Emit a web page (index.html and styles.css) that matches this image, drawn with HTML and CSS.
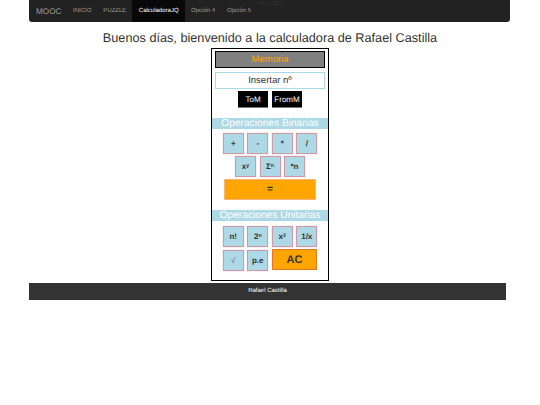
FILE: index.html
```html
<!DOCTYPE html>
<html lang="es">
<head>
<meta charset="utf-8">
<title>Calculadora</title>
<link rel="stylesheet" href="styles.css">
</head>
<body>
<nav class="navbar">
  <a class="brand">MOOC</a>
  <a class="link">INICIO</a>
  <a class="link">PUZZLE</a>
  <a class="link active">CalculadoraJQ</a>
  <a class="link">Opción 4</a>
  <a class="link">Opción 5</a>
  <span class="ghost">=PUZZLE</span>
</nav>
<h1 class="title">Buenos días, bienvenido a la calculadora de Rafael Castilla</h1>
<main class="calc">
  <div class="memory">Memoria</div>
  <input class="entry" type="text" placeholder="Insertar nº">
  <div class="mem-row">
    <button class="mem-btn">ToM</button>
    <button class="mem-btn">FromM</button>
  </div>
  <div class="section">Operaciones Binarias</div>
  <div class="row row-first">
    <button class="key">+</button>
    <button class="key">-</button>
    <button class="key">*</button>
    <button class="key">/</button>
  </div>
  <div class="row">
    <button class="key">x<sup>y</sup></button>
    <button class="key">Σ<sup>n</sup></button>
    <button class="key">*n</button>
  </div>
  <div class="row">
    <button class="equals">=</button>
  </div>
  <div class="section">Operaciones Unitarias</div>
  <div class="row row-first-u">
    <button class="key">n!</button>
    <button class="key">2<sup>n</sup></button>
    <button class="key">x<sup>2</sup></button>
    <button class="key">1/x</button>
  </div>
  <div class="row row-last">
    <button class="key key-root">√</button>
    <button class="key">p.e</button>
    <button class="clear">AC</button>
  </div>
</main>
<footer class="footer">Rafael Castilla</footer>
</body>
</html>
```

FILE: styles.css
```css
* { box-sizing: border-box; }
html, body { margin: 0; padding: 0; background: #fff; }
body {
  font-family: "Liberation Sans", Arial, sans-serif;
  color: #333;
  text-rendering: geometricPrecision;
}
button, input { text-rendering: geometricPrecision; }

.navbar {
  display: flex;
  align-items: stretch;
  width: 481px;
  height: 22px;
  margin-left: 29px;
  padding-left: 7px;
  background: #222;
  border-radius: 0 0 3px 3px;
}
.brand {
  display: flex;
  align-items: center;
  width: 31px;
  font-size: 8.2px;
  color: #9d9d9d;
}
.link {
  display: flex;
  align-items: center;
  padding: 0 6px;
  font-size: 6px;
  color: #9d9d9d;
}
.active { padding: 0 6.5px; background: #080808; color: #fff; }
.ghost {
  margin: 1px 0 0 1px;
  font-size: 6px;
  color: #333;
}

.title {
  margin: 6px 0 0;
  height: 20px;
  line-height: 20px;
  font-size: 12.7px;
  font-weight: 400;
  text-align: center;
  color: #333;
}

.calc {
  width: 118px;
  height: 233px;
  margin: 0 auto;
  padding: 2px 0 0;
  border: 1px solid #000;
  display: flex;
  flex-direction: column;
  align-items: center;
  background: #fff;
}
.memory {
  width: 110px;
  height: 17px;
  line-height: 15px;
  background: #808080;
  border: 1px solid #000;
  color: #ffa500;
  font-size: 9.5px;
  text-align: center;
}
.entry {
  width: 110px;
  height: 17px;
  margin-top: 4px;
  padding: 0;
  border: 1px solid #add8e6;
  background: #fff;
  font: 9.5px "Liberation Sans", Arial, sans-serif;
  text-align: center;
  color: #333;
}
.entry::placeholder { color: #333; opacity: 1; }
.mem-row {
  display: flex;
  gap: 4px;
  margin-top: 2px;
}
.mem-btn {
  width: 30px;
  height: 17px;
  padding: 0;
  background: #000;
  border: 0;
  border-bottom: 1px solid #777;
  color: #fff;
  font: 8px "Liberation Sans", Arial, sans-serif;
}
.section {
  width: 116px;
  height: 11px;
  margin-top: 10px;
  line-height: 12px;
  background: #add8e6;
  color: #fff;
  font-size: 10.2px;
  text-align: center;
}
.row {
  display: flex;
  justify-content: center;
  gap: 3.5px;
  margin-top: 2px;
}
.row-first { margin-top: 4px; }
.row-first-u { margin-top: 5px; }
.row-last { margin-top: 3px; align-items: flex-start; }
.key {
  width: 21px;
  height: 21px;
  padding: 0;
  background: #add8e6;
  border: 1px solid #cf9aa8;
  box-shadow: 0 0 1px #d9a5b5;
  color: #333;
  font: 700 8px "Liberation Sans", Arial, sans-serif;
}
.key sup { font-size: 5.2px; line-height: 0; vertical-align: 2.5px; }
.key-root { font-weight: 400; color: #667; }
.equals {
  width: 92px;
  height: 21px;
  padding: 0;
  background: #ffa500;
  border: 1px solid #fbb478;
  color: #333;
  font: 700 10px "Liberation Sans", Arial, sans-serif;
}
.clear {
  width: 45.5px;
  height: 21px;
  margin-top: -1px;
  padding: 0;
  background: #ffa500;
  border: 1px solid #e2762a;
  color: #333;
  font: 700 11px "Liberation Sans", Arial, sans-serif;
}

.footer {
  width: 477px;
  height: 17px;
  margin: 2px 0 0 29px;
  line-height: 17px;
  background: #333;
  color: #fff;
  font-size: 6px;
  text-align: center;
}
```
